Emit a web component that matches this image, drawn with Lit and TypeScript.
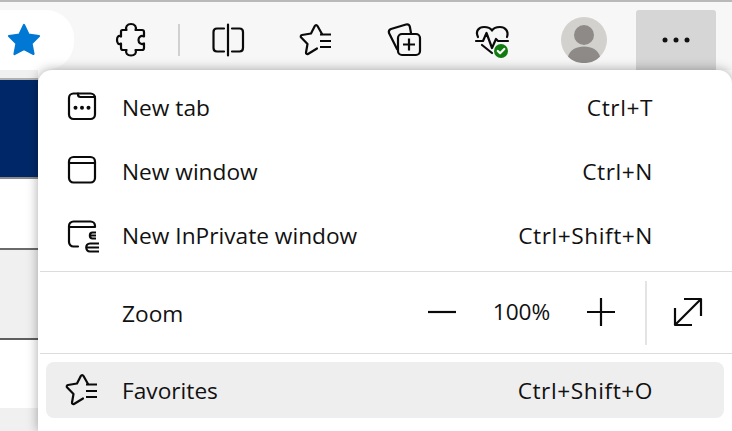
import { LitElement, html, css, svg } from 'lit';
import { customElement } from 'lit/decorators.js';

// every icon is drawn in page pixels inside its own 36px box
const favIcon = svg`
  <path d="M24 12 19.500 4c-.7-1.300-2-1.300-2.700 0L13 11.500 4 13c-1.300.2-1.700 1.600-.8 2.500L9.500 22 8 30.500c-.2 1.300 1 2 2 1.500l9-5.500"/>
  <path d="M22 12.500H33M22 19H33M22 25H33" stroke-linecap="butt"/>`;

const puzzleIcon = svg`
  <path d="M9.500 8h4c-1.500-3 .8-6 4.500-6s6 3 4.500 6H29c1.200 0 2 .8 2 2v4.500c-3-1.500-5.500.5-5.500 3.500s2.500 5 5.500 3.500V26c0 1.200-.8 2-2 2h-6.500c1.500 3-.8 5.500-4.500 5.500s-6-2.500-4.500-5.500H10c-1.200 0-2-.8-2-2v-4.500c-2.500 1.500-4-.5-4-3.500s1.500-5 4-3.500V9.500C8 8.500 8.500 8 9.500 8z"/>`;

@customElement('app-root')
export class AppRoot extends LitElement {
  static styles = css`
    :host {
      display: block;
      width: 732px;
      height: 431px;
      overflow: hidden;
      font-family: 'Open Sans', 'Noto Sans', sans-serif;
      color: #111;
    }
    svg {
      display: block;
      fill: none;
      stroke: #0a0a0a;
      stroke-width: 2.2;
      stroke-linecap: round;
      stroke-linejoin: round;
      overflow: visible;
    }
    .toolbar {
      height: 68px;
      border-top: 2px solid #b9b9b9;
      background: #f7f7f7;
      display: flex;
      gap: 8px;
      align-items: flex-end;
    }
    .pill {
      width: 74px;
      height: 60px;
      margin-right: 9px;
      background: #fff;
      border-radius: 0 28px 28px 0;
      display: flex;
      align-items: center;
      padding-left: 7px;
      box-sizing: border-box;
    }
    .star {
      stroke: #0078d4;
      fill: #0078d4;
    }
    .btn {
      width: 80px;
      height: 60px;
      display: flex;
      align-items: center;
      justify-content: center;
      border-radius: 3px 3px 0 0;
    }
    .btn.on {
      background: #d6d6d6;
    }
    .btn.me {
      margin: 0 4px;
    }
    .tsep {
      width: 2px;
      height: 32px;
      margin: 0 0 14px -1px;
      background: #d0d0d0;
    }
    .solid {
      stroke: none;
    }
    .dots {
      stroke: none;
      fill: #111;
    }
    .main {
      display: flex;
      height: 361px;
    }
    .page {
      width: 38px;
      flex: none;
      display: flex;
      flex-direction: column;
      background: #f0f0f0;
    }
    .page div {
      flex: none;
      box-sizing: border-box;
    }
    .navy {
      height: 99px;
      margin-top: 8px;
      border-top: 2px solid #b0b0b0;
      background: #002868;
    }
    .w1 {
      height: 73px;
      background: #fff;
      border-top: 2px solid #8a8a8a;
      border-bottom: 2px solid #6a6a6a;
    }
    .g1 {
      height: 90px;
      background: #f0f0f0;
      border-bottom: 2px solid #5f5f5f;
    }
    .w2 {
      height: 68px;
      background: #fff;
    }
    .menu {
      flex: 1;
      background: #fff;
      border-radius: 14px 14px 0 0;
      box-shadow: 0 0 12px rgba(0, 0, 0, 0.35);
      padding-top: 9px;
      position: relative;
      display: flex;
      flex-direction: column;
    }
    .row {
      height: 56px;
      margin: 0 8px 8px 8px;
      padding: 0 71px 0 17px;
      display: flex;
      align-items: center;
      font-size: 22.7px;
      border-radius: 8px;
      flex: none;
    }
    .row.hot {
      background: #eeeeee;
      margin: 8px 8px 0 8px;
    }
    .ico {
      width: 36px;
      height: 36px;
      margin-right: 23px;
      flex: none;
    }
    .row.hot .ico {
      margin-left: 1px;
      margin-right: 22px;
    }
    .label {
      flex: 1;
    }
    .keys {
      letter-spacing: 0.55px;
    }
    .hr {
      height: 1px;
      margin-left: 2px;
      background: #dcdcdc;
      flex: none;
    }
    .zoom {
      height: 81px;
      display: flex;
      align-items: center;
      font-size: 22.7px;
      padding-left: 84px;
      flex: none;
    }
    .zoom .label {
      padding-top: 2px;
    }
    .zbtn {
      width: 28px;
      height: 28px;
      flex: none;
      margin-top: -2px;
    }
    .pct {
      width: 131px;
      text-align: center;
      margin-top: -2px;
    }
    .vsep {
      width: 2px;
      height: 64px;
      background: #e4e4e4;
      margin: 0 27px 0 30px;
    }
    .zoom .zbtn:last-child {
      margin-right: 30px;
    }
  `;

  render() {
    return html`
      <div class="toolbar">
        <div class="pill">
          <svg class="star" width="34" height="34" viewBox="0 0 34 34">
            <path d="M17 2 21.500 11.500 32 13 24.500 20.500 26.500 31 17 26 7.500 31 9.500 20.500 2 13 12.500 11.500Z"/>
          </svg>
        </div>
        <div class="btn">
          <svg width="36" height="36" viewBox="0 0 36 36">${puzzleIcon}</svg>
        </div>
        <div class="tsep"></div>
        <div class="btn">
          <svg width="36" height="36" viewBox="0 0 36 36">
            <path d="M14 6.500H7c-2 0-3.500 1.500-3.500 3.500v16c0 2 1.500 3.500 3.500 3.500h7M22 6.500h7.500c2 0 3.500 1.500 3.500 3.500v16c0 2-1.500 3.500-3.500 3.500H22M18 2.500v31"/>
          </svg>
        </div>
        <div class="btn">
          <svg width="36" height="36" viewBox="0 0 36 36">${favIcon}</svg>
        </div>
        <div class="btn">
          <svg width="36" height="36" viewBox="0 0 36 36">
            <path d="M11 27 3 11c-.5-2 .3-3.500 2-4L20 2.500c2-.5 3.300.3 3.800 2L25 11"/>
            <rect x="12" y="12" width="22" height="21" rx="4"/>
            <path d="M23 16.500v12M17 22.500h12" stroke-linecap="butt"/>
          </svg>
        </div>
        <div class="btn">
          <svg width="36" height="36" viewBox="0 0 36 36">
            <path d="M4 15C1 9 5 5 10 5c3.500 0 6.500 1 8 3.500C19.500 6 22.500 5 26 5c5 0 9 4 7 10"/>
            <path d="M2 19H9L12.500 11 18 26 22 17 24 19H34"/>
            <path d="M8 23l10 8"/>
            <circle class="solid" cx="27" cy="29" r="7" fill="#107c10"/>
            <path d="M23.800 29l2.300 2.300 4.200-4.300" stroke="#fff"/>
          </svg>
        </div>
        <div class="btn me">
          <svg class="solid" width="46" height="46" viewBox="0 0 46 46">
            <circle cx="23" cy="23" r="23" fill="#d2d1ce"/>
            <circle cx="23" cy="18" r="10" fill="#8e8a87"/>
            <path d="M7 39.500C9 33 15 29.500 23 29.500s14 3.500 16 10C35 44 29 46 23 46S11 44 7 39.500z" fill="#8e8a87"/>
          </svg>
        </div>
        <div class="btn on">
          <svg class="dots" width="28" height="6" viewBox="0 0 28 6">
            <circle cx="3" cy="3" r="2.500"/><circle cx="14" cy="3" r="2.500"/><circle cx="25" cy="3" r="2.500"/>
          </svg>
        </div>
      </div>
      <div class="main">
        <div class="page">
          <div class="navy"></div>
          <div class="w1"></div>
          <div class="g1"></div>
          <div class="w2"></div>
        </div>
        <div class="menu">
          <div class="row">
            <svg class="ico" viewBox="0 0 36 36">
              <rect x="6" y="4.500" width="26" height="25.500" rx="4.500"/>
              <path d="M15 4.500v1c0 1.500 1 2.500 2.500 2.500H32"/>
              <g class="solid" fill="#0a0a0a"><circle cx="12.500" cy="18.700" r="2"/><circle cx="19" cy="18.700" r="2"/><circle cx="25.500" cy="18.700" r="2"/></g>
            </svg>
            <span class="label">New tab</span><span class="keys">Ctrl+T</span>
          </div>
          <div class="row">
            <svg class="ico" viewBox="0 0 36 36">
              <rect x="6" y="4" width="26" height="25.500" rx="4.500"/>
              <path d="M6 10h26"/>
            </svg>
            <span class="label">New window</span><span class="keys">Ctrl+N</span>
          </div>
          <div class="row">
            <svg class="ico" viewBox="0 0 36 36">
              <path d="M15 29.500h-4.500C8 29.500 6 27.500 6 25V9c0-2.500 2-4.500 4.500-4.500h17C30 4.500 32 6.500 32 9v1M6 10h26"/>
              <path d="M33 15.500h-3.500c-3.500 0-3.500 6 0 6H33M27.500 18.500H33M36 26.500H27c-5 0-5 8 0 8h9M24 30.500h12" stroke-linecap="butt"/>
            </svg>
            <span class="label">New InPrivate window</span><span class="keys">Ctrl+Shift+N</span>
          </div>
          <div class="hr"></div>
          <div class="zoom">
            <span class="label">Zoom</span>
            <svg class="zbtn" viewBox="0 0 28 28"><path d="M0 14h28" stroke-linecap="butt"/></svg>
            <span class="pct">100%</span>
            <svg class="zbtn" viewBox="0 0 28 28"><path d="M0 14h28M14 0v28" stroke-linecap="butt"/></svg>
            <div class="vsep"></div>
            <svg class="zbtn" viewBox="0 0 28 28"><path d="M1 27 27 1M10 1h17v17M1 10v17h17" stroke-linecap="butt"/></svg>
          </div>
          <div class="hr"></div>
          <div class="row hot">
            <svg class="ico" viewBox="0 0 36 36">${favIcon}</svg>
            <span class="label">Favorites</span><span class="keys">Ctrl+Shift+O</span>
          </div>
        </div>
      </div>
    `;
  }
}
